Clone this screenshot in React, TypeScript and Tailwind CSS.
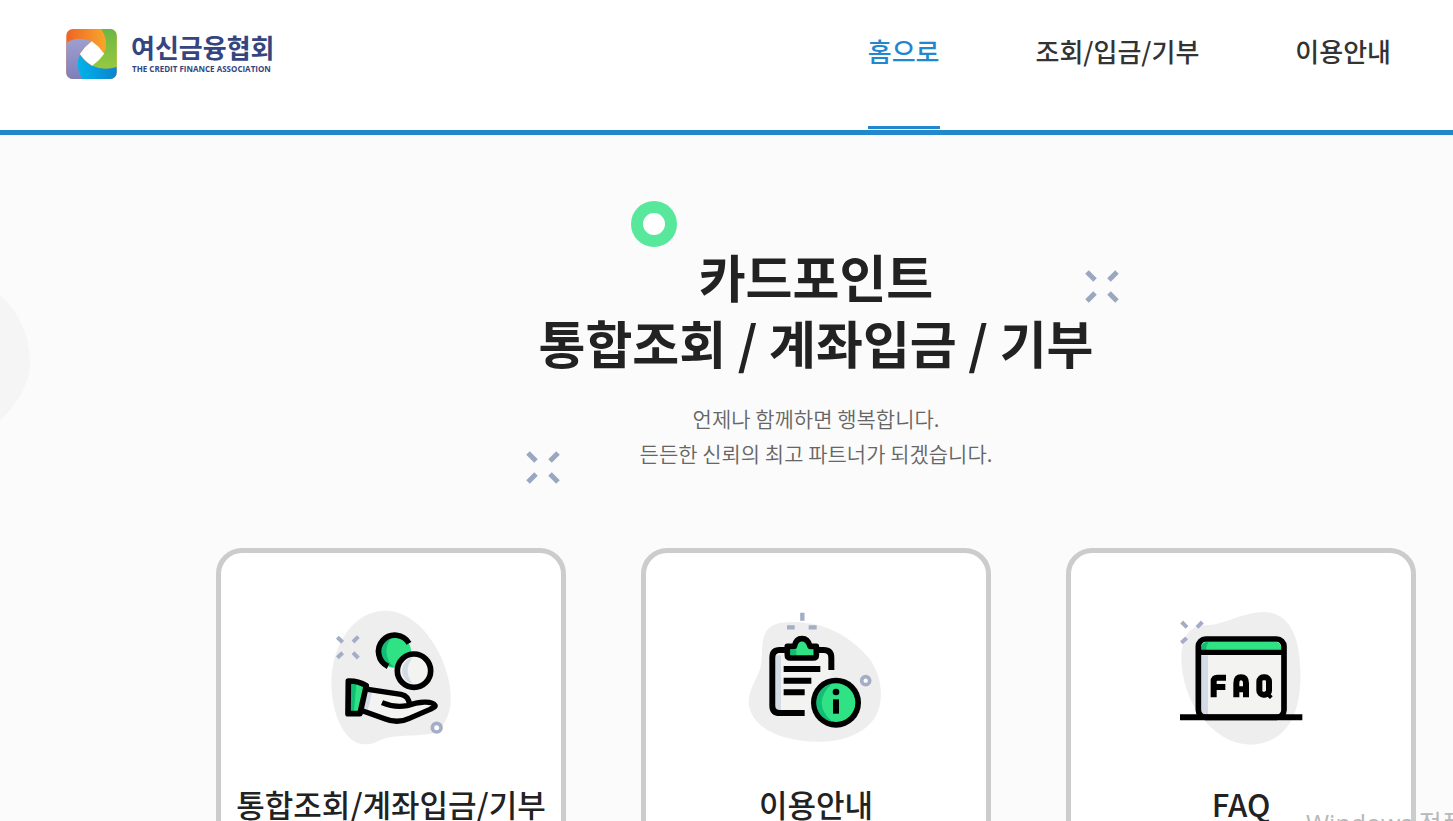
import React from 'react';

interface MenuItem {
  label: string;
  href: string;
  active?: boolean;
}

interface ServiceCard {
  title: string;
  href: string;
  icon: React.ReactNode;
}

const menuItems: MenuItem[] = [
  { label: '홈으로', href: '#home', active: true },
  { label: '조회/입금/기부', href: '#inquiry' },
  { label: '이용안내', href: '#guide' }
];

const LogoMark: React.FC = () => (
  <svg className="w-[51px] h-[50px]" viewBox="48 42 152 150" aria-hidden="true">
    <defs>
      <clipPath id="logo-clip">
        <rect x="48" y="42" width="152" height="150" rx="20" />
      </clipPath>
      <linearGradient id="logo-orange" x1="0" x2="1">
        <stop offset="0" stopColor="#ee6426" />
        <stop offset="0.8" stopColor="#f8a72b" />
      </linearGradient>
      <linearGradient id="logo-green" x1="0" x2="0" y1="0" y2="1">
        <stop offset="0" stopColor="#6cb644" />
        <stop offset="1" stopColor="#97c93f" />
      </linearGradient>
      <linearGradient id="logo-blue" x1="0" x2="1">
        <stop offset="0" stopColor="#00b4ea" />
        <stop offset="1" stopColor="#0b83cf" />
      </linearGradient>
      <linearGradient id="logo-purple" x1="0" x2="0" y1="0" y2="1">
        <stop offset="0" stopColor="#9f9fce" />
        <stop offset="1" stopColor="#7e7fba" />
      </linearGradient>
    </defs>
    <g clipPath="url(#logo-clip)">
      <rect x="48" y="42" width="152" height="150" fill="url(#logo-orange)" />
      <path d="M153 42 Q178 78 161 117 Q145 138 118 152 Q160 170 200 156 V42 Z" fill="url(#logo-green)" />
      <path d="M200 156 Q160 168 126 152 Q100 140 89 117 Q70 155 96 192 H200 Z" fill="url(#logo-blue)" />
      <path d="M48 83 Q84 62 125 79 Q104 94 89 117 Q72 155 97 192 H48 Z" fill="url(#logo-purple)" />
      <path d="M125 79 Q147 94 162 116 Q147 138 126 152 Q104 139 89 117 Q104 94 125 79 Z" fill="#fff" />
    </g>
  </svg>
);

const Sparkle: React.FC<{ className?: string }> = ({ className }) => (
  <svg className={className} viewBox="0 0 34 34" stroke="#9aa7c0" strokeWidth="5" fill="none" aria-hidden="true">
    <path d="M2 2l8 8M32 2l-8 8M2 31l8-8M32 31l-8-8" />
  </svg>
);

const PointIcon: React.FC = () => (
  <svg className="w-40 h-[170px]" viewBox="3 0 480 510" fill="none" aria-hidden="true">
    <path
      d="M222 62C290 60 347 112 387 188C411 236 425 292 422 335C419 378 398 420 372 429C330 440 277 434 232 443C205 450 193 464 160 463C108 460 64 380 64 276C66 160 133 64 222 62Z"
      fill="#eeeeee"
    />
    <path d="M82 142l16 15M145 140l-16 16M82 203l16-15M145 204l-16-16" stroke="#a3aec6" strokeWidth="12" />
    <circle cx="380" cy="413" r="13" fill="#fff" stroke="#a3aec6" strokeWidth="11" />
    <circle cx="254" cy="184" r="49" fill="#2fe283" />
    <path d="M246 142A46 46 0 0 0 234 228L252 232A62 62 0 0 1 246 142Z" fill="#12bd75" />
    <path d="M297 160A49 49 0 1 0 234 229" stroke="#000" strokeWidth="17" />
    <circle cx="312" cy="242" r="50" fill="#f3f3f1" stroke="#000" strokeWidth="17" />
    <path d="M308 202A41 41 0 0 0 308 282Q278 242 308 202Z" fill="#d5dbe6" />
    <path d="M173 298L282 316Q296 322 299 343L350 332Q372 332 375 346L300 385Q263 400 235 389L157 363Z" fill="#f3f3f1" />
    <path d="M175 304L186 307Q180 335 174 358L161 355Z" fill="#d5dbe6" />
    <path
      d="M174 298L273 313Q297 318 298 344M216 338Q254 354 291 347C326 335 366 331 375 346C377 351 370 353 360 358L298 385Q263 402 224 386L157 362"
      stroke="#000"
      strokeWidth="16"
      strokeLinejoin="round"
    />
    <path d="M115 273Q144 272 169 287L152 371H114Z" fill="#2fe283" />
    <path d="M120 282H139L132 362H120Z" fill="#12bd75" />
    <path d="M115 273Q144 272 169 287L150 371H114Z" stroke="#000" strokeWidth="17" strokeLinejoin="round" />
  </svg>
);

const GuideIcon: React.FC = () => (
  <svg className="w-[170px] h-[170px]" viewBox="3 0 510 510" fill="none" aria-hidden="true">
    <path
      d="M155 98C258 85 352 127 417 204C449 248 458 298 450 342C438 414 361 455 270 455C165 456 71 421 57 347C50 300 88 261 93 224C101 178 83 108 155 98Z"
      fill="#eeeeee"
    />
    <path d="M217 68v24M171 112h23M236 112h24" stroke="#a3aec6" strokeWidth="13" />
    <circle cx="407" cy="272" r="12" fill="#fff" stroke="#a3aec6" strokeWidth="11" />
    <path d="M127 182H304V280L224 369H127Z" fill="#f3f3f1" />
    <path d="M138 196h15v164h-15z" fill="#d5dbe6" />
    <path d="M170 180H149Q127 180 127 203V347Q127 369 150 369H224M260 180H281Q304 180 304 203V240" stroke="#000" strokeWidth="18" />
    <path d="M172 171H193Q198 146 216 146Q234 146 240 171H258V203H172Z" fill="#2fe283" />
    <path d="M181 180H199V196H181Z" fill="#12bd75" />
    <path d="M172 169H193Q198 146 216 146Q234 146 240 169H259V195Q259 204 250 204H181Q172 204 172 195Z" stroke="#000" strokeWidth="17" strokeLinejoin="round" />
    <path d="M161 237H271M161 272H244M161 307H224" stroke="#000" strokeWidth="18" />
    <circle cx="318" cy="338" r="75" fill="#000" />
    <circle cx="318" cy="338" r="58" fill="#2fe283" />
    <path d="M306 281A58 58 0 0 0 306 395Q244 338 306 281Z" fill="#12bd75" />
    <circle cx="318" cy="306" r="10" fill="#000" />
    <path d="M318 328v43" stroke="#000" strokeWidth="18" />
  </svg>
);

const FaqIcon: React.FC = () => (
  <svg className="w-40 h-[170px]" viewBox="3 0 480 510" fill="none" aria-hidden="true">
    <path
      d="M132 106C195 106 244 67 312 66C371 67 404 114 415 177C426 247 425 327 397 386C369 439 322 464 274 464C218 464 165 434 126 382C86 335 64 265 64 203C65 146 87 106 132 106Z"
      fill="#eeeeee"
    />
    <path d="M65 96l16 16M127 96l-16 16M64 158l16-14" stroke="#a3aec6" strokeWidth="12" />
    <rect x="115" y="147" width="257" height="235" rx="24" fill="#f3f3f1" />
    <path d="M122 196h22v178h-22z" fill="#d5dbe6" />
    <path d="M122 182Q122 155 142 155H346Q365 155 365 182Z" fill="#2fe283" />
    <path d="M122 182Q122 155 146 155Q138 166 138 182Z" fill="#12bd75" />
    <path d="M118 187H369" stroke="#000" strokeWidth="16" />
    <rect x="115" y="147" width="257" height="235" rx="22" stroke="#000" strokeWidth="17" />
    <path d="M60 382H427" stroke="#000" strokeWidth="18" />
    {/* lettering strokes of the sign */}
    <path d="M161 322V274Q161 263 172 263H198M161 291H196" stroke="#000" strokeWidth="18" />
    <path d="M229 322V280Q229 262 243 262Q258 262 258 280V322M229 298H258" stroke="#000" strokeWidth="18" />
    <rect x="298" y="262" width="29" height="52" rx="12" stroke="#000" strokeWidth="18" />
    <path d="M315 305l19 18" stroke="#000" strokeWidth="12" />
  </svg>
);

const serviceCards: ServiceCard[] = [
  { title: '통합조회/계좌입금/기부', href: '#inquiry', icon: <PointIcon /> },
  { title: '이용안내', href: '#guide', icon: <GuideIcon /> },
  { title: 'FAQ', href: '#faq', icon: <FaqIcon /> }
];

const Header: React.FC = () => (
  <header className="flex justify-between h-[135px] pl-[66px] pr-[62px] bg-white border-b-[5px] border-[#2288ce]">
    <a href="#home" className="flex items-start gap-[14px] pt-[29px]">
      <LogoMark />
      <span className="flex flex-col text-[#34457f] font-bold whitespace-nowrap">
        <span className="text-[26px] leading-9">여신금융협회</span>
        <span className="pl-px font-['Open_Sans',sans-serif] text-[8px] leading-2">THE CREDIT FINANCE ASSOCIATION</span>
      </span>
    </a>
    <nav className="flex gap-24">
      {menuItems.map((item) => (
        <a
          key={item.label}
          href={item.href}
          className={`h-[129px] pt-[31px] text-[26px] leading-10 font-medium whitespace-nowrap border-b-[3px] ${
            item.active ? 'text-[#2288ce] border-[#2288ce]' : 'text-[#333333] border-transparent'
          }`}
        >
          {item.label}
        </a>
      ))}
    </nav>
  </header>
);

export default function App() {
  return (
    <div className="relative h-screen overflow-hidden bg-[#fbfbfb] font-['Noto_Sans_CJK_KR',sans-serif]">
      <Header />

      <main className="relative pl-[216px] pr-[37px] pt-[108px]">
        {/* Background blob */}
        <svg className="absolute left-0 top-[155px] w-8 h-[145px]" viewBox="0 0 32 145" aria-hidden="true">
          <path d="M0 5Q30 33 30 73Q30 100 0 131Z" fill="#f5f5f5" />
        </svg>

        <section className="relative text-center">
          {/* Floating decorations */}
          <span className="absolute left-1/2 -top-[42px] -ml-[185px] w-[46px] h-[46px] rounded-full border-12 border-[#58e89b] bg-white" />
          <Sparkle className="absolute left-1/2 top-[27px] ml-[269px] w-[34px] h-[34px]" />
          <Sparkle className="absolute left-1/2 top-[208px] -ml-[290px] w-[34px] h-[34px]" />

          <h1 className="text-[51px] leading-[66px] font-bold text-[#222222]">
            카드포인트
            <br />
            통합조회 / 계좌입금 / 기부
          </h1>
          <p className="mt-[26px] text-[21px] leading-[35px] font-[350] text-[#666666]">
            언제나 함께하면 행복합니다.
            <br />
            든든한 신뢰의 최고 파트너가 되겠습니다.
          </p>
        </section>

        <section className="grid grid-cols-3 gap-[75px] mt-[77px]">
          {serviceCards.map((card) => (
            <a
              key={card.title}
              href={card.href}
              className="flex flex-col items-center pt-[37px] pb-12 bg-white border-[5px] border-[#cccccc] rounded-[26px]"
            >
              {card.icon}
              <h2 className="mt-[21px] text-[31px] leading-[46px] font-medium text-[#222222] whitespace-nowrap">
                {card.title}
              </h2>
            </a>
          ))}
        </section>
      </main>

      {/* Activation watermark, runs off the corner */}
      <div className="absolute left-[1306px] top-[805px] font-['Open_Sans','Noto_Sans_CJK_KR',sans-serif] text-[25px] leading-9 text-[#b8b8b8] whitespace-nowrap">
        Windows 정품 인증
      </div>
    </div>
  );
}
